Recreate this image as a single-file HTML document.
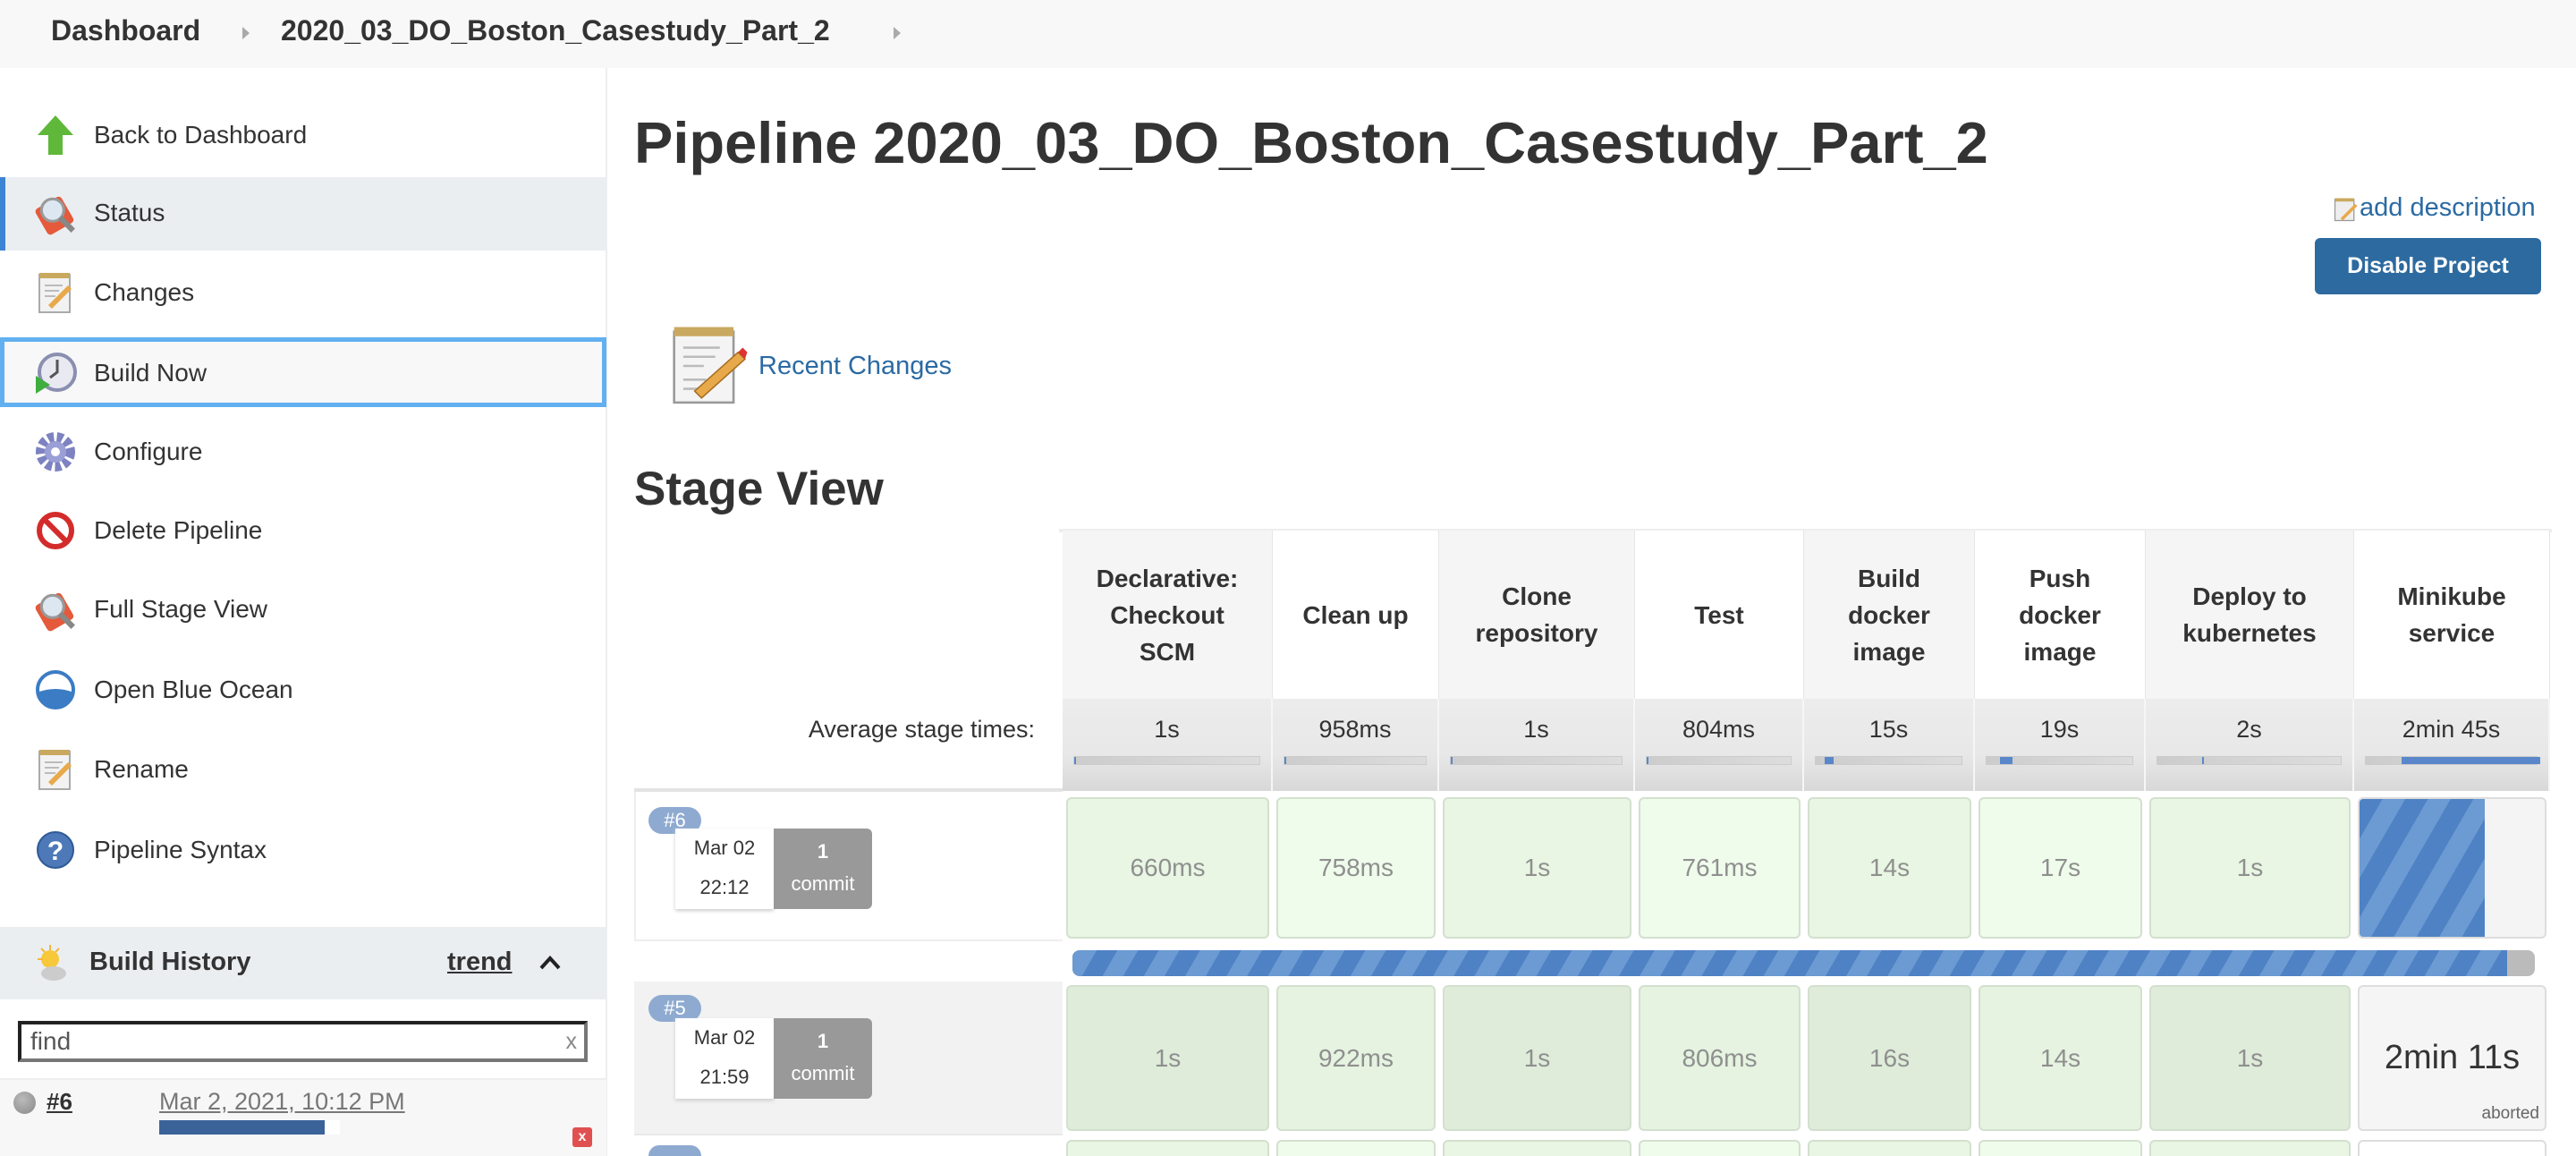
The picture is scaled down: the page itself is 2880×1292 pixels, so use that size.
<!DOCTYPE html>
<html style="width:2880px;height:1292px;overflow:hidden"><head><meta charset="utf-8"><style>
*{margin:0;padding:0;box-sizing:border-box}
body{width:2880px;height:1292px;overflow:hidden;background:#fff;font-family:"Liberation Sans",sans-serif;color:#333;position:relative}
.a{position:absolute}
.crumb{left:0;top:0;width:2880px;height:76px;background:#f8f8f8}
.crumb span{position:absolute;top:16px;font-size:32px;font-weight:bold;color:#333}
.arr{position:absolute;top:30px;width:0;height:0;border-left:8px solid #aaa;border-top:7px solid transparent;border-bottom:7px solid transparent}
.side{left:0;top:76px;width:679px;height:1216px;border-right:2px solid #eee}
.item{position:absolute;left:0;width:678px;height:80px}
.item .t{position:absolute;left:105px;top:24px;font-size:28px;color:#333}
.item svg{position:absolute;left:38px;top:16px}
.cellh{position:absolute;top:593px;height:188px;display:flex;align-items:center;justify-content:center;text-align:center;font-weight:bold;font-size:28px;line-height:41px;color:#333;border-right:1px solid #e6e6e6}
.avg{position:absolute;top:781px;height:103px;background:linear-gradient(#ececec,#e8e8e8 60%,#d8d8d8);border-right:2px solid #f6f6f6;text-align:center;font-size:27px;color:#333;padding-top:19px}
.avg i{position:absolute;left:12px;right:12px;top:64px;height:10px;background:linear-gradient(90deg,#ccc,#ddd);border:1px solid #ccc}
.avg i b{position:absolute;left:0;top:0;bottom:0;width:2px;background:#5a87c9}
.c{position:absolute;border:2px solid #d3e0ce;border-radius:6px;display:flex;align-items:center;justify-content:center;font-size:28px;color:#8f8f8f}
.r6{top:891px;height:158px}
.r5{top:1101px;height:163px}
.r4{top:1274px;height:18px;border-bottom:none;border-radius:6px 6px 0 0}
.g1{background:#e8f6e3}.g2{background:#effbeb}
.h1{background:#deecd9}.h2{background:#e5f3e0}
.stripe{background:repeating-linear-gradient(-60deg,#4f82c4 0 22px,#6c9ad2 22px 44px)}
</style></head><body>
<div class="a crumb">
 <span style="left:57px">Dashboard</span>
 <div class="arr" style="left:271px"></div>
 <span style="left:314px">2020_03_DO_Boston_Casestudy_Part_2</span>
 <div class="arr" style="left:999px"></div>
</div>
<div class="a side"></div>
<div class="item" style="top:111px"><svg width="48" height="48" viewBox="0 0 24 24"><path d="M12 1 L22 12 H16 V23 H8 V12 H2 Z" fill="#5fb83a"/></svg><div class="t">Back to Dashboard</div></div>
<div class="item" style="top:198px;height:82px;background:#ebeef1;border-left:6px solid #3d84d4"><svg width="50" height="50" viewBox="0 0 24 24" style="left:32px"><rect x="3" y="5" width="16" height="16" rx="2" fill="#e45a3a" transform="rotate(-30 11 13)"/><circle cx="10" cy="10" r="6" fill="#dde7f2" stroke="#999" stroke-width="1.5"/><path d="M14 14 L21 21" stroke="#888" stroke-width="3"/></svg><div class="t" style="left:99px">Status</div></div>
<div class="item" style="top:287px"><svg width="48" height="50" viewBox="0 0 24 25"><rect x="3" y="2" width="17" height="21" fill="#f2f2f2" stroke="#aaa"/><rect x="3" y="1" width="17" height="3" fill="#c9a960"/><path d="M6 8h10M6 11h8M6 14h6" stroke="#bbb"/><path d="M8 19 L19 8 L21 10 L10 21 Z" fill="#e8a94a"/></svg><div class="t">Changes</div></div>
<div class="item" style="top:377px;height:78px;border:5px solid #62b0f0;background:#f8f8f8"><svg width="48" height="48" viewBox="0 0 24 24" style="left:33px;top:10px"><circle cx="13" cy="12" r="10" fill="#e9e9f2" stroke="#8a8fb0" stroke-width="2"/><path d="M13 5v7l-4 3" stroke="#555" stroke-width="1.5" fill="none"/><path d="M1 14 L9 19 L1 24 Z" fill="#3fae3f"/></svg><div class="t" style="top:19px;left:100px">Build Now</div></div>
<div class="item" style="top:465px"><svg width="48" height="48" viewBox="0 0 24 24"><circle cx="12" cy="12" r="8" fill="none" stroke="#7d82c0" stroke-width="6" stroke-dasharray="3.2 1.6"/><circle cx="12" cy="12" r="6" fill="#9aa0d6"/><circle cx="12" cy="12" r="2.5" fill="#fff"/></svg><div class="t">Configure</div></div>
<div class="item" style="top:553px"><svg width="48" height="48" viewBox="0 0 24 24"><circle cx="12" cy="12" r="9" fill="#fff" stroke="#d42b2b" stroke-width="3"/><path d="M6 6 L18 18" stroke="#d42b2b" stroke-width="3"/></svg><div class="t">Delete Pipeline</div></div>
<div class="item" style="top:641px"><svg width="50" height="50" viewBox="0 0 24 24"><rect x="3" y="5" width="16" height="16" rx="2" fill="#e45a3a" transform="rotate(-30 11 13)"/><circle cx="10" cy="10" r="6" fill="#dde7f2" stroke="#999" stroke-width="1.5"/><path d="M14 14 L21 21" stroke="#888" stroke-width="3"/></svg><div class="t">Full Stage View</div></div>
<div class="item" style="top:731px"><svg width="48" height="48" viewBox="0 0 24 24"><circle cx="12" cy="12" r="10" fill="#fff" stroke="#3b7cc4" stroke-width="2"/><path d="M3 13 Q12 10 21 13 A9 9 0 0 1 3 13Z" fill="#3b7cc4"/></svg><div class="t">Open Blue Ocean</div></div>
<div class="item" style="top:820px"><svg width="48" height="50" viewBox="0 0 24 25"><rect x="3" y="2" width="17" height="21" fill="#f2f2f2" stroke="#aaa"/><rect x="3" y="1" width="17" height="3" fill="#c9a960"/><path d="M6 8h10M6 11h8M6 14h6" stroke="#bbb"/><path d="M8 19 L19 8 L21 10 L10 21 Z" fill="#e8a94a"/></svg><div class="t">Rename</div></div>
<div class="item" style="top:910px"><svg width="48" height="48" viewBox="0 0 24 24"><circle cx="12" cy="12" r="10" fill="#4d79b8" stroke="#2f5b96"/><text x="12" y="17.5" font-size="15" font-weight="bold" fill="#fff" text-anchor="middle" font-family="Liberation Sans">?</text></svg><div class="t">Pipeline Syntax</div></div>
<div class="a" style="left:0;top:1036px;width:678px;height:81px;background:#ebeef1"></div>
<svg class="a" style="left:40px;top:1054px" width="34" height="44" viewBox="0 0 17 22"><circle cx="8" cy="9" r="5" fill="#f6c83a"/><path d="M8 1v3M1 9h3M3 3l2 2M13 3l-2 2" stroke="#f4b63a"/><ellipse cx="10" cy="17" rx="7" ry="4" fill="#ccc"/></svg>
<div class="a" style="left:100px;top:1059px;font-size:29px;font-weight:bold">Build History</div>
<div class="a" style="left:500px;top:1059px;font-size:29px;font-weight:bold;text-decoration:underline">trend</div>
<svg class="a" style="left:602px;top:1066px" width="26" height="20" viewBox="0 0 26 20"><path d="M3 16 L13 5 L23 16" stroke="#222" stroke-width="4" fill="none"/></svg>
<div class="a" style="left:20px;top:1141px;width:637px;height:46px;border:4px solid #222;border-bottom-color:#777;border-right-color:#777;font-size:28px;color:#555;padding:3px 10px">find<span style="position:absolute;right:8px;top:5px;font-size:25px;color:#888">x</span></div>
<div class="a" style="left:0;top:1205px;width:678px;height:87px;background:#f7f7f7;border-top:2px solid #eee"></div>
<div class="a" style="left:15px;top:1220px;width:25px;height:25px;border-radius:50%;background:radial-gradient(circle at 40% 35%,#bbb,#888)"></div>
<div class="a" style="left:52px;top:1216px;font-size:26px;font-weight:bold;text-decoration:underline">#6</div>
<div class="a" style="left:178px;top:1216px;font-size:27px;color:#777;text-decoration:underline">Mar 2, 2021, 10:12 PM</div>
<div class="a" style="left:178px;top:1252px;width:202px;height:16px;background:#fff"><div style="width:185px;height:16px;background:#3b6399"></div></div>
<div class="a" style="left:640px;top:1260px;width:22px;height:22px;background:#e05050;border-radius:3px;color:#fff;font-size:16px;text-align:center;line-height:22px;font-weight:bold">x</div>

<div class="a" style="left:709px;top:122px;font-size:65px;font-weight:bold;color:#333">Pipeline 2020_03_DO_Boston_Casestudy_Part_2</div>
<svg class="a" style="left:2608px;top:219px" width="30" height="30" viewBox="0 0 24 24"><rect x="2" y="3" width="17" height="19" fill="#eee" stroke="#999"/><rect x="2" y="2" width="17" height="3" fill="#c9a960"/><path d="M7 20 L20 7 L22 9 L9 22 Z" fill="#e8a94a"/></svg>
<div class="a" style="left:2638px;top:216px;font-size:29px;color:#2b6aa3">add description</div>
<div class="a" style="left:2588px;top:266px;width:253px;height:63px;background:#2d6a9f;border-radius:6px;color:#fff;font-size:25px;font-weight:bold;text-align:center;line-height:63px">Disable Project</div>
<svg class="a" style="left:746px;top:363px" width="92" height="92" viewBox="0 0 36 36"><rect x="3" y="3" width="26" height="31" fill="#f4f4f4" stroke="#999"/><rect x="3" y="1" width="26" height="4" fill="#c9a960"/><path d="M7 10h16M7 14h14M7 18h9M7 24h10M7 28h12" stroke="#bbb"/><path d="M12 29 L31 12 L34 15 L15 32 Z" fill="#e8a94a" stroke="#a86d1f" stroke-width=".6"/><path d="M31 12 L34 15 L35 12 L33 10Z" fill="#d33"/></svg>
<div class="a" style="left:848px;top:393px;font-size:29px;color:#2b6aa3">Recent Changes</div>
<div class="a" style="left:709px;top:516px;font-size:53px;font-weight:bold;color:#333">Stage View</div>

<div class="a" style="left:1184px;top:591px;width:1669px;height:4px;background:#eee"></div>
<div class="a" style="left:709px;top:881px;width:479px;height:4px;background:#e3e3e3"></div>
<div class="a" style="left:1157px;top:800px;font-size:27px;color:#333;transform:translateX(-100%)">Average stage times:</div>

<div class="cellh" style="left:1188px;width:235px;background:#f5f5f5">Declarative:<br>Checkout<br>SCM</div>
<div class="cellh" style="left:1423px;width:186px;background:#fff">Clean up</div>
<div class="cellh" style="left:1609px;width:219px;background:#f5f5f5">Clone<br>repository</div>
<div class="cellh" style="left:1828px;width:189px;background:#fff">Test</div>
<div class="cellh" style="left:2017px;width:191px;background:#f5f5f5">Build<br>docker<br>image</div>
<div class="cellh" style="left:2208px;width:191px;background:#fff">Push<br>docker<br>image</div>
<div class="cellh" style="left:2399px;width:233px;background:#f5f5f5">Deploy to<br>kubernetes</div>
<div class="cellh" style="left:2632px;width:219px;background:#fff">Minikube<br>service</div>

<div class="avg" style="left:1188px;width:235px">1s<i><b></b></i></div>
<div class="avg" style="left:1423px;width:186px">958ms<i><b></b></i></div>
<div class="avg" style="left:1609px;width:219px">1s<i><b></b></i></div>
<div class="avg" style="left:1828px;width:189px">804ms<i><b></b></i></div>
<div class="avg" style="left:2017px;width:191px">15s<i><b style="left:10px;width:10px"></b></i></div>
<div class="avg" style="left:2208px;width:191px">19s<i><b style="left:15px;width:14px"></b></i></div>
<div class="avg" style="left:2399px;width:233px">2s<i><b style="left:50px"></b></i></div>
<div class="avg" style="left:2632px;width:219px">2min 45s<i><b style="left:40px;width:155px"></b></i></div>

<div class="a" style="left:709px;top:885px;width:479px;height:167px;border-left:2px solid #eee;border-bottom:2px solid #eee"></div>
<div class="a" style="left:725px;top:902px;width:59px;height:30px;border-radius:15px;background:#8eaad0;color:#fff;font-size:22px;text-align:center;line-height:30px">#6</div>
<div class="a" style="left:755px;top:926px;width:110px;height:90px;background:#fff;box-shadow:0 2px 4px #ccc;text-align:center;font-size:22px;line-height:44px">Mar 02<br>22:12</div>
<div class="a" style="left:865px;top:926px;width:110px;height:90px;background:#999;border-radius:0 6px 6px 0;color:#fff;text-align:center;font-size:22px;line-height:36px;padding-top:8px"><b>1</b><br>commit</div>
<div class="c r6 g1" style="left:1192px;width:227px">660ms</div>
<div class="c r6 g2" style="left:1427px;width:178px">758ms</div>
<div class="c r6 g1" style="left:1613px;width:211px">1s</div>
<div class="c r6 g2" style="left:1832px;width:181px">761ms</div>
<div class="c r6 g1" style="left:2021px;width:183px">14s</div>
<div class="c r6 g2" style="left:2212px;width:183px">17s</div>
<div class="c r6 g1" style="left:2403px;width:225px">1s</div>
<div class="c r6" style="left:2636px;width:211px;background:#f4f4f4;border-color:#ddd;overflow:hidden;justify-content:flex-start"><div class="stripe" style="width:140px;height:100%"></div></div>
<div class="a" style="left:1199px;top:1062px;width:1635px;height:29px;border-radius:8px;background:#bbb;overflow:hidden"><div style="width:1604px;height:29px;background:repeating-linear-gradient(-60deg,#4f82c4 0 20px,#6c9ad2 20px 40px)"></div></div>
<div class="a" style="left:709px;top:1097px;width:479px;height:172px;background:#f2f2f2;border-bottom:2px solid #e8e8e8"></div>
<div class="a" style="left:725px;top:1112px;width:59px;height:30px;border-radius:15px;background:#8eaad0;color:#fff;font-size:22px;text-align:center;line-height:30px">#5</div>
<div class="a" style="left:755px;top:1138px;width:110px;height:90px;background:#fff;box-shadow:0 2px 4px #ccc;text-align:center;font-size:22px;line-height:44px">Mar 02<br>21:59</div>
<div class="a" style="left:865px;top:1138px;width:110px;height:90px;background:#999;border-radius:0 6px 6px 0;color:#fff;text-align:center;font-size:22px;line-height:36px;padding-top:8px"><b>1</b><br>commit</div>
<div class="c r5 h1" style="left:1192px;width:227px">1s</div>
<div class="c r5 h2" style="left:1427px;width:178px">922ms</div>
<div class="c r5 h1" style="left:1613px;width:211px">1s</div>
<div class="c r5 h2" style="left:1832px;width:181px">806ms</div>
<div class="c r5 h1" style="left:2021px;width:183px">16s</div>
<div class="c r5 h2" style="left:2212px;width:183px">14s</div>
<div class="c r5 h1" style="left:2403px;width:225px">1s</div>
<div class="c r5" style="left:2636px;width:211px;background:#f5f5f5;border-color:#ddd;color:#333;font-size:38px">2min 11s<span style="position:absolute;right:6px;bottom:6px;font-size:19px;color:#666">aborted</span></div>
<div class="a" style="left:725px;top:1280px;width:59px;height:12px;border-radius:15px 15px 0 0;background:#8eaad0"></div>
<div class="c r4 g1" style="left:1192px;width:227px"></div>
<div class="c r4 g2" style="left:1427px;width:178px"></div>
<div class="c r4 g1" style="left:1613px;width:211px"></div>
<div class="c r4 g2" style="left:1832px;width:181px"></div>
<div class="c r4 g1" style="left:2021px;width:183px"></div>
<div class="c r4 g2" style="left:2212px;width:183px"></div>
<div class="c r4 g1" style="left:2403px;width:225px"></div>
<div class="c r4" style="left:2636px;width:211px;background:#fff;border-color:#ddd"></div>
</body></html>
